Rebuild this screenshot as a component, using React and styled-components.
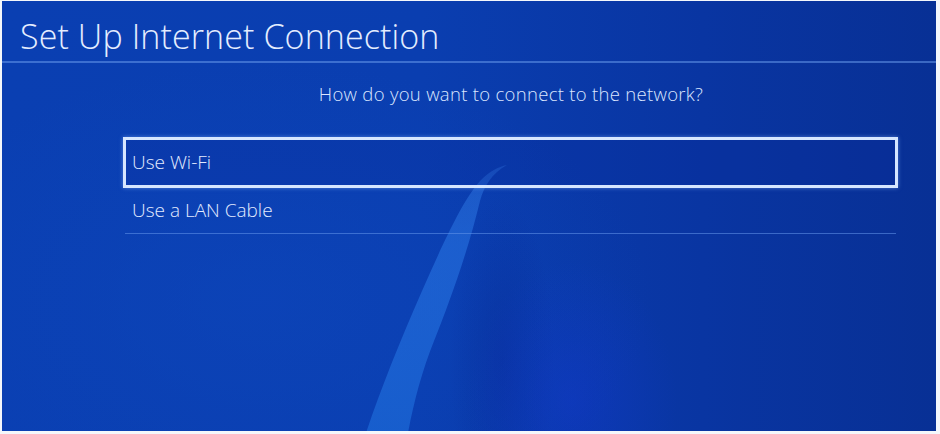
import styled, { createGlobalStyle } from 'styled-components';

const GlobalStyle = createGlobalStyle`
	html, body {
		margin: 0;
		padding: 0;
		background: #ffffff;
	}
	body {
		font-family: 'Open Sans', 'Noto Sans', sans-serif;
	}
`;

const Frame = styled.div`
	width: 940px;
	height: 434px;
	padding: 1px 4px 3px 2px;
	box-sizing: border-box;
	background: #f4f7fb;
`;

const Screen = styled.div`
	position: relative;
	width: 100%;
	height: 100%;
	overflow: hidden;
	background:
		radial-gradient(ellipse 150px 200px at 570px 400px, rgba(20, 55, 210, 0.4), transparent 70%),
		radial-gradient(ellipse 70px 220px at 500px 360px, rgba(6, 36, 140, 0.35), transparent 75%),
		radial-gradient(ellipse 520px 320px at 260px 300px, rgba(14, 72, 190, 0.45), transparent 75%),
		linear-gradient(90deg, #0a3fb2 0%, #0a3eb0 45%, #0935a2 75%, #083095 100%);
`;

const Streak = styled.svg`
	position: absolute;
	left: 0;
	top: 0;
	pointer-events: none;
`;

const Content = styled.div`
	position: relative;
	display: flex;
	flex-direction: column;
`;

const Header = styled.div`
	height: 60px;
	padding-left: 18px;
	display: flex;
	align-items: center;
	border-bottom: 2px solid rgba(110, 160, 240, 0.5);
`;

const Title = styled.h1`
	margin: 0;
	font-size: 34px;
	font-weight: 300;
	color: #e4edff;
	letter-spacing: 0.1px;
	padding-top: 10px;
`;

const Question = styled.div`
	margin-top: 18px;
	text-align: center;
	padding-left: 84px;
	font-size: 18.5px;
	font-weight: 300;
	letter-spacing: 0.3px;
	color: #dbe6ff;
`;

const Options = styled.div`
	margin: 31px 38px 0 121px;
	display: flex;
	flex-direction: column;
`;

const Option = styled.div`
	height: ${(props) => (props.selected ? '51px' : '46px')};
	box-sizing: border-box;
	display: flex;
	align-items: center;
	font-size: 19px;
	font-weight: 300;
	color: #e2ebff;
	border: ${(props) => (props.selected ? '3px solid #d6e6ff' : 'none')};
	border-bottom: ${(props) =>
		props.selected ? '3px solid #d6e6ff' : '1px solid rgba(100, 150, 235, 0.55)'};
	margin: ${(props) => (props.selected ? '0' : '0 2px')};
	padding-left: ${(props) => (props.selected ? '6px' : '7px')};
	padding-bottom: 2px;
	box-shadow: ${(props) => (props.selected ? '0 0 4px rgba(150, 190, 255, 0.5)' : 'none')};
	background: ${(props) => (props.selected ? 'rgba(8, 40, 150, 0.25)' : 'transparent')};
`;

const options = [
	{ label: 'Use Wi-Fi', selected: true },
	{ label: 'Use a LAN Cable', selected: false },
];

const App = () => {
	return (
		<>
			<GlobalStyle />
			<Frame>
				<Screen>
					<Streak width='934' height='430' viewBox='0 0 934 430'>
						<defs>
							<linearGradient id='streak' x1='0' y1='0' x2='0' y2='1'>
								<stop offset='0' stopColor='#3a86ee' stopOpacity='0.35' />
								<stop offset='0.3' stopColor='#2a78e6' stopOpacity='0.55' />
								<stop offset='1' stopColor='#1c6ad8' stopOpacity='0.7' />
							</linearGradient>
						</defs>
						<path
							d='M505 164 C490 172 482 185 478 200 C466 250 448 300 432 340 C420 370 412 400 406 432 L364 432 C378 390 398 340 420 290 C440 245 460 200 478 180 C488 170 496 166 505 164 Z'
							fill='url(#streak)'
						/>
					</Streak>
					<Content>
						<Header>
							<Title>Set Up Internet Connection</Title>
						</Header>
						<Question>How do you want to connect to the network?</Question>
						<Options>
							{options.map((option) => (
								<Option key={option.label} selected={option.selected}>
									{option.label}
								</Option>
							))}
						</Options>
					</Content>
				</Screen>
			</Frame>
		</>
	);
};

export default App;
